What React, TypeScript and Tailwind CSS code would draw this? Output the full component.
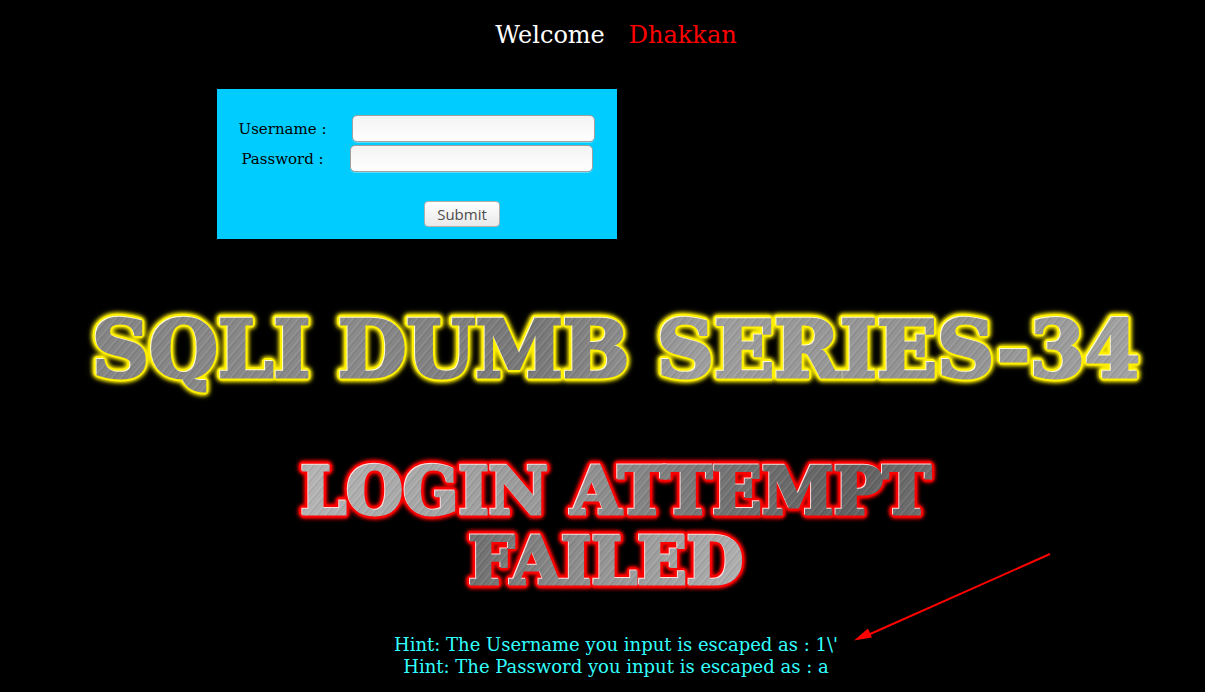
import React from 'react';

const metal =
  "bg-clip-text text-center font-['DejaVu_Serif',serif] font-bold text-transparent [-webkit-text-stroke:3px_transparent]";

function Field({ id, label, type }: { id: string; label: string; type: string }) {
  return (
    <div className="flex items-center justify-center gap-[26px]">
      <label htmlFor={id} className="whitespace-nowrap text-[15px] leading-5">
        {label}
      </label>
      <input
        id={id}
        name={id}
        type={type}
        className="h-[27px] w-[243px] rounded-[5px] border border-[#a3a09d] bg-linear-to-b from-[#f3f3f3] to-white px-2 text-sm shadow-[0_1px_0_0_rgba(255,255,255,0.35)]"
      />
    </div>
  );
}

export default function App() {
  return (
    <div className="min-h-screen overflow-hidden bg-black pl-[27px] font-['DejaVu_Serif',serif]">
      <header className="flex justify-center gap-6 pt-[21px] text-2xl leading-7">
        <span className="text-white">Welcome</span>
        <span className="text-[#ff0000]">Dhakkan</span>
      </header>

      <form
        className="mt-10 ml-[190px] flex h-[150px] w-[400px] flex-col gap-[3px] bg-[#00ccff] pt-[26px] text-black"
        onSubmit={(event) => event.preventDefault()}
      >
        <Field id="uname" label="Username :" type="text" />
        <Field id="passwd" label="Password :" type="password" />
        <div className="flex justify-center pt-[26px] pl-[90px]">
          <button
            type="submit"
            className="h-[26px] w-[76px] rounded-[4px] border border-[#b3aeaa] bg-linear-to-b from-white to-[#e9e9e9] font-['Open_Sans',sans-serif] text-[15px] leading-5 text-[#4c4c4c]"
          >
            Submit
          </button>
        </div>
      </form>

      <h1 className="mt-[65px] text-center whitespace-nowrap text-[79px] leading-[92px] [filter:drop-shadow(-1px_-1px_0_#fffbd0)_drop-shadow(1px_1px_0_#fff000)_drop-shadow(-1px_-1px_0_#fff000)_drop-shadow(1px_-1px_0_#fff000)_drop-shadow(-1px_1px_0_#fff000)_drop-shadow(0_0_2px_#fff000)_drop-shadow(0_0_2px_#fff000)]">
        <span
          className={`${metal} bg-[repeating-linear-gradient(130deg,rgba(255,255,255,0.1)_0px,rgba(0,0,0,0.08)_2px,rgba(255,255,255,0.04)_4px,rgba(0,0,0,0.04)_5px,rgba(255,255,255,0.1)_7px),linear-gradient(100deg,#858585,#8b8b8b_25%,#777_42%,#a0a0a0_58%,#929292_80%,#a5a5a5)]`}
        >
          SQLI DUMB SERIES-34
        </span>
      </h1>

      <h2 className="mt-[60px] text-center text-[65px] leading-[70px] [filter:drop-shadow(-1px_-1px_0_#ffe0e0)_drop-shadow(1px_1px_0_#f00)_drop-shadow(-1px_-1px_0_#f00)_drop-shadow(1px_-1px_0_#f00)_drop-shadow(-1px_1px_0_#f00)_drop-shadow(0_0_2px_#f00)_drop-shadow(0_0_1px_#f00)]">
        <span
          className={`${metal} block bg-[repeating-linear-gradient(130deg,rgba(255,255,255,0.1)_0px,rgba(0,0,0,0.08)_2px,rgba(255,255,255,0.04)_4px,rgba(0,0,0,0.04)_5px,rgba(255,255,255,0.1)_7px),linear-gradient(100deg,#b5b5b5_25%,#999_45%,#707070_60%,#606060_70%,#777_80%)]`}
        >
          LOGIN ATTEMPT
        </span>
        <span
          className={`${metal} block pr-5 bg-[repeating-linear-gradient(130deg,rgba(255,255,255,0.1)_0px,rgba(0,0,0,0.08)_2px,rgba(255,255,255,0.04)_4px,rgba(0,0,0,0.04)_5px,rgba(255,255,255,0.1)_7px),linear-gradient(100deg,#707070_38%,#999_50%,#b5b5b5_62%)]`}
        >
          FAILED
        </span>
      </h2>

      <div className="relative mt-[38px] pb-3 text-center text-lg leading-[22px] text-[#33ffff]">
        <p>Hint: The Username you input is escaped as : 1\&#39;</p>
        <p>Hint: The Password you input is escaped as : a</p>
        <svg
          className="absolute -top-[81px] left-[calc(50%+238px)]"
          width="198"
          height="90"
          viewBox="0 0 198 90"
          aria-hidden="true"
        >
          <path d="M14 82 196 1" stroke="#ff0000" strokeWidth="2" />
          <path d="M0 87.500 14 75.500 18 84.500Z" fill="#ff0000" />
        </svg>
      </div>
    </div>
  );
}
